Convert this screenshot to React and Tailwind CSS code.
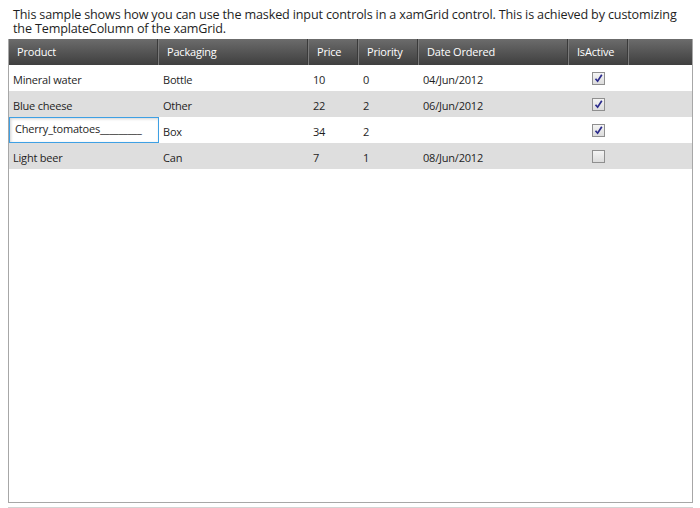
import React from "react";

const rows = [
  { product: "Mineral water", pack: "Bottle", price: "10", pri: "0", date: "04/Jun/2012", active: true },
  { product: "Blue cheese", pack: "Other", price: "22", pri: "2", date: "06/Jun/2012", active: true },
  { product: "Cherry_tomatoes_________", pack: "Box", price: "34", pri: "2", date: "", active: true, edit: true },
  { product: "Light beer", pack: "Can", price: "7", pri: "1", date: "08/Jun/2012", active: false },
];

function Check({ on }) {
  return (
    <div className="w-[13px] h-[13px] border border-[#8f8f8f] bg-gradient-to-b from-[#f4f4f4] to-[#dcdcdc] flex items-center justify-center">
      {on && (
        <svg width="9" height="9" viewBox="0 0 9 9">
          <path d="M1.5 4.8 L3.6 7.2 L7.8 0.8" fill="none" stroke="#2a2a8c" strokeWidth="1.7" />
        </svg>
      )}
    </div>
  );
}

function HeadCell({ w, children }) {
  return (
    <div className={`${w} h-full flex items-center pl-[8px] pt-[1px] border-r border-r-[#7a7a7a] shadow-[inset_-1px_0_0_#3a3a3a]`}>
      {children}
    </div>
  );
}

export default function App() {
  return (
    <div className="w-[700px] h-[508px] bg-white relative overflow-hidden" style={{ fontFamily: '"Open Sans", "Noto Sans", sans-serif' }}>
      <p className="pl-[13px] pr-[8px] pt-[8px] text-[12.6px] leading-[14px] text-[#1e1e1e] tracking-[-0.15px]">
        This sample shows how you can use the masked input controls in a xamGrid control. This is achieved by customizing the TemplateColumn of the xamGrid.
      </p>
      <div className="absolute left-[8px] top-[39px] w-[685px] h-[464px] border border-[#a7a7a7] border-t-0 flex flex-col">
        <div className="h-[26px] flex bg-gradient-to-b from-[#6c6c6c] to-[#3f3f3f] text-white text-[11px] tracking-[-0.2px]">
          <HeadCell w="w-[150px]">Product</HeadCell>
          <HeadCell w="w-[150px]">Packaging</HeadCell>
          <HeadCell w="w-[50px]">Price</HeadCell>
          <HeadCell w="w-[60px]">Priority</HeadCell>
          <HeadCell w="w-[150px]">Date Ordered</HeadCell>
          <HeadCell w="w-[60px]">IsActive</HeadCell>
        </div>
        {rows.map((r, i) => (
          <div key={i} className={`h-[26px] flex items-center text-[11px] text-[#1e1e1e] tracking-[-0.2px] ${i % 2 ? "bg-[#dedede]" : "bg-white"}`}>
            {r.edit ? (
              <div className="w-[150px] h-full pl-[5px] flex items-center bg-white border border-[#3ea0e4] shadow-[inset_1px_1px_3px_rgba(0,0,0,0.18)] pb-[1px]">
                {r.product}
              </div>
            ) : (
              <div className="w-[150px] pl-[4px] pt-[4px]">{r.product}</div>
            )}
            <div className="w-[150px] pl-[4px] pt-[4px]">{r.pack}</div>
            <div className="w-[50px] pl-[4px] pt-[4px]">{r.price}</div>
            <div className="w-[60px] pl-[4px] pt-[4px]">{r.pri}</div>
            <div className="w-[150px] pl-[4px] pt-[4px]">{r.date}</div>
            <div className="w-[60px] flex justify-center pr-[1px]"><Check on={r.active} /></div>
          </div>
        ))}
      </div>
      <div className="absolute left-[8px] top-[507px] w-[685px] h-[1px] bg-[#d4d4d4]" />
    </div>
  );
}
